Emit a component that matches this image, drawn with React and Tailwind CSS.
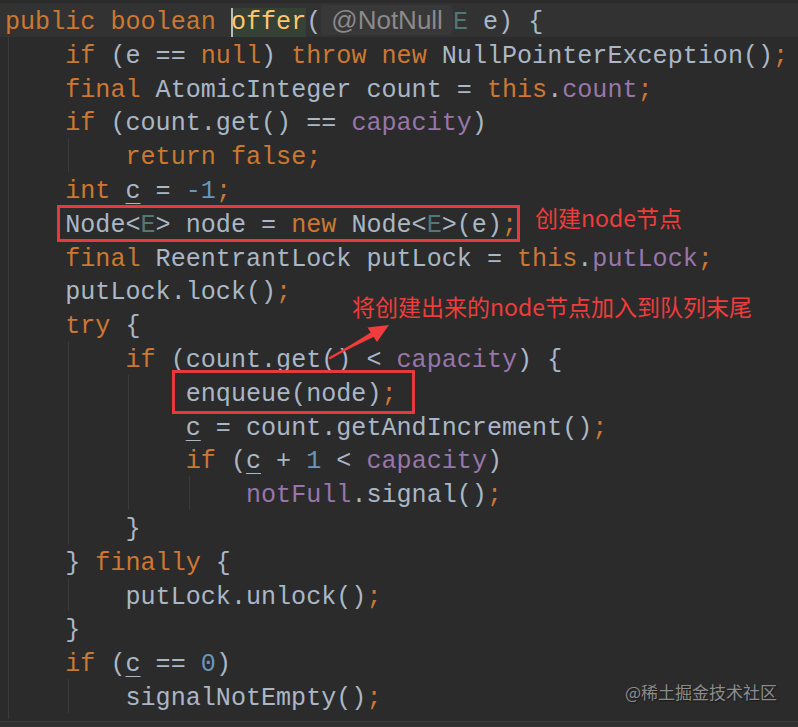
import React from 'react';

// token colours (Darcula)
const K = 'text-[#cc7832]';
const D = 'text-[#a9b7c6]';
const P = 'text-[#9876aa]';
const N = 'text-[#6897bb]';
const T = 'text-[#507874]';
const U = 'text-[#a9b7c6] underline decoration-[#a9b7c6] underline-offset-[5px] decoration-1';

const lines = [
    { guides: [], tokens: null },
    { guides: [0], tokens: [[D, '    '], [K, 'if'], [D, ' (e == '], [K, 'null'], [D, ') '], [K, 'throw new '], [D, 'NullPointerException()'], [K, ';']] },
    { guides: [0], tokens: [[D, '    '], [K, 'final '], [D, 'AtomicInteger count = '], [K, 'this'], [D, '.'], [P, 'count'], [K, ';']] },
    { guides: [0], tokens: [[D, '    '], [K, 'if'], [D, ' (count.get() == '], [P, 'capacity'], [D, ')']] },
    { guides: [0, 4], tokens: [[D, '        '], [K, 'return false;']] },
    { guides: [0], tokens: [[D, '    '], [K, 'int '], [U, 'c'], [D, ' = '], [N, '-1'], [K, ';']] },
    { guides: [0], tokens: [[D, '    Node<'], [T, 'E'], [D, '> node = '], [K, 'new '], [D, 'Node<'], [T, 'E'], [D, '>(e)'], [K, ';']] },
    { guides: [0], tokens: [[D, '    '], [K, 'final '], [D, 'ReentrantLock putLock = '], [K, 'this'], [D, '.'], [P, 'putLock'], [K, ';']] },
    { guides: [0], tokens: [[D, '    putLock.lock()'], [K, ';']] },
    { guides: [0], tokens: [[D, '    '], [K, 'try '], [D, '{']] },
    { guides: [0, 4], tokens: [[D, '        '], [K, 'if'], [D, ' (count.get() < '], [P, 'capacity'], [D, ') {']] },
    { guides: [0, 4, 8], tokens: [[D, '            enqueue(node)'], [K, ';']] },
    { guides: [0, 4, 8], tokens: [[D, '            '], [U, 'c'], [D, ' = count.getAndIncrement()'], [K, ';']] },
    { guides: [0, 4, 8], tokens: [[D, '            '], [K, 'if'], [D, ' ('], [U, 'c'], [D, ' + '], [N, '1'], [D, ' < '], [P, 'capacity'], [D, ')']] },
    { guides: [0, 4, 8, 12], tokens: [[D, '                '], [P, 'notFull'], [D, '.signal()'], [K, ';']] },
    { guides: [0, 4], tokens: [[D, '        }']] },
    { guides: [0], tokens: [[D, '    } '], [K, 'finally '], [D, '{']] },
    { guides: [0, 4], tokens: [[D, '        putLock.unlock()'], [K, ';']] },
    { guides: [0], tokens: [[D, '    }']] },
    { guides: [0], tokens: [[D, '    '], [K, 'if'], [D, ' ('], [U, 'c'], [D, ' == '], [N, '0'], [D, ')']] },
    { guides: [0, 4], tokens: [[D, '        signalNotEmpty()'], [K, ';']] },
];

const FirstLine = () => (
    <>
        <span className={K}>public boolean </span>
        <span className="bg-[#344134] text-[#ffc66d] shadow-[inset_2px_0_0_#bbbbbb]">offer</span>
        <span className={D}>(</span>
        <span className="inline-block rounded-[4px] bg-[#383838] px-[10px] font-['Liberation_Sans',sans-serif] text-[26px] leading-[30px] text-[#8a8a8a]">@NotNull</span>
        <span className={T}>E</span>
        <span className={D}> e) {'{'}</span>
    </>
);

function CodeLine({ line, index }) {
    return (
        <div className={`relative h-[33.8px] whitespace-pre pl-[5px] leading-[40px] ${index === 0 ? 'bg-[#323232]' : ''}`}>
            {line.guides.map(col => (
                <span key={col} className="absolute top-0 bottom-0 w-px bg-[#3a3a3a]" style={{ left: 8 + col * 15.06 }} />
            ))}
            <span className="relative">
                {line.tokens
                    ? line.tokens.map(([cls, text], i) => <span key={i} className={cls}>{text}</span>)
                    : <FirstLine />}
            </span>
        </div>
    );
}

export default function App() {
    return (
        <div className="relative flex h-[727px] w-[798px] flex-col overflow-hidden bg-[#2b2b2b] font-['Liberation_Mono',monospace] text-[25.1px]">
            <div className="flex-1 pt-[3px]">
                {lines.map((line, i) => <CodeLine key={i} line={line} index={i} />)}
                <div className="relative h-[6px]">
                    <span className="absolute top-0 bottom-0 left-[8px] w-px bg-[#3a3a3a]" />
                </div>
            </div>
            <div className="h-[6px] border-t border-[#3a3a3a] bg-[#303030]" />

            {/* annotations */}
            <div className="pointer-events-none absolute left-[57px] top-[205px] h-[37px] w-[463px] border-[3px] border-[#e53b3d]" />
            <div className="pointer-events-none absolute left-[172px] top-[370px] h-[44px] w-[243px] border-[3px] border-[#e53b3d]" />
            <div className="absolute left-[535px] top-[204px] font-['Noto_Sans_CJK_SC','Noto_Sans',sans-serif] text-[23px] leading-[26px] text-[#f03c3c]">创建node节点</div>
            <div className="absolute left-[352px] top-[293px] font-['Noto_Sans_CJK_SC','Noto_Sans',sans-serif] text-[23px] leading-[26px] text-[#f03c3c]">将创建出来的node节点加入到队列末尾</div>
            <svg className="pointer-events-none absolute left-0 top-0" width="798" height="727">
                <polygon points="330,358 371.5,332 374.5,336.5" fill="#f03c3c" />
                <line x1="330" y1="358" x2="373" y2="334" stroke="#f03c3c" strokeWidth="2.5" strokeLinecap="round" />
                <polygon points="389,325 367.5,327.5 377,342" fill="#f03c3c" />
            </svg>
            <div className="absolute left-[625px] top-[681px] font-['Noto_Sans_CJK_SC','Noto_Sans',sans-serif] text-[17px] leading-[22px] text-[#8c8c8c] [text-shadow:1px_1px_1px_#1a1a1a]">@稀土掘金技术社区</div>
        </div>
    );
}
